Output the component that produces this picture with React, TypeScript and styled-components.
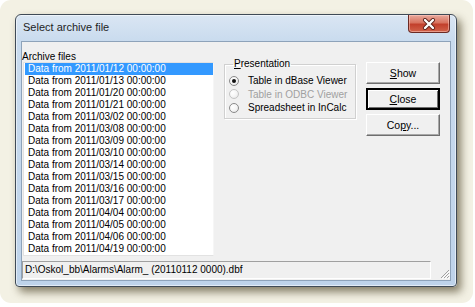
import React from 'react';
import styled, { createGlobalStyle, css } from 'styled-components';

const GlobalStyle = createGlobalStyle`
  html, body {
    margin: 0;
    padding: 0;
    background: #ffffff;
  }
  body {
    font-family: "Liberation Sans", Arial, sans-serif;
  }
`;

const Backdrop = styled.div`
  width: 473px;
  height: 303px;
  box-sizing: border-box;
  padding: 14px 0 0 15px;
  background: #f3f1e4;
  border-radius: 11px;
`;

const Window = styled.div`
  width: 442px;
  height: 273px;
  box-sizing: border-box;
  border: 1px solid #3f4a56;
  border-radius: 6px 6px 4px 4px;
  padding: 0 5px 5px 5px;
  display: flex;
  flex-direction: column;
  background: linear-gradient(180deg, #dae6f3 0px, #c9dbee 26px, #bed3ea 100%);
  box-shadow: 4px 5px 9px rgba(60, 50, 20, 0.6), inset 0 0 0 1px rgba(255, 255, 255, 0.55);
`;

const TitleBar = styled.div`
  height: 26px;
  display: flex;
  align-items: flex-start;
  justify-content: space-between;
  padding-left: 2px;
`;

const Title = styled.span`
  font-size: 11px;
  line-height: 13px;
  color: #1e1e1e;
  margin-top: 6px;
`;

const CloseButton = styled.div`
  width: 42px;
  height: 18px;
  margin-right: 1px;
  box-sizing: border-box;
  border: 1px solid #6b2a24;
  border-top: none;
  border-radius: 0 0 4px 4px;
  background: linear-gradient(180deg, #e9a99d 0%, #d8735f 45%, #c2402c 55%, #d1624a 100%);
  box-shadow: inset 0 0 0 1px rgba(255, 210, 200, 0.5);
  display: flex;
  align-items: center;
  justify-content: center;
`;

const Client = styled.div`
  flex: 1;
  box-sizing: border-box;
  border: 1px solid #8ea3ba;
  background: #f0f0f0;
  padding: 10px 0 1px 0;
  display: flex;
  flex-direction: column;
`;

const MainRow = styled.div`
  height: 204px;
  display: flex;
  align-items: flex-start;
`;

const FilesColumn = styled.div`
  width: 192px;
  display: flex;
  flex-direction: column;
`;

const Caption = styled.span`
  font-size: 10px;
  line-height: 10px;
  color: #000;
`;

const ListBox = styled.div`
  margin-left: 1px;
  height: 194px;
  box-sizing: border-box;
  border: 1px solid #e2e2e2;
  border-right-color: #f6f6f6;
  padding-left: 1px;
  background: #ffffff;
  overflow: hidden;
`;

const ListRow = styled.div<{ $selected?: boolean }>`
  height: 12px;
  line-height: 12px;
  font-size: 10px;
  padding-left: 3px;
  white-space: nowrap;
  color: #000;
  ${(p) =>
    p.$selected &&
    css`
      background: #3399ff;
      color: #ffffff;
    `}
`;

const Group = styled.fieldset`
  margin: 7px 0 0 10px;
  width: 132px;
  box-sizing: border-box;
  padding: 5px 0 3px 4px;
  border: 1px solid #d0d0d0;
  box-shadow: 1px 1px 0 #ffffff, inset 1px 1px 0 #ffffff;
  min-inline-size: 0;
`;

const Legend = styled.legend`
  font-size: 10px;
  line-height: 10px;
  margin-left: 4px;
  padding: 0 1px;
  color: #000;
`;

const Accel = styled.span`
  text-decoration: underline;
`;

const RadioRow = styled.div<{ $disabled?: boolean }>`
  height: 13.5px;
  display: flex;
  align-items: center;
  font-size: 10px;
  color: ${(p) => (p.$disabled ? '#a0a0a0' : '#000')};
`;

const RadioDot = styled.span<{ $checked?: boolean; $disabled?: boolean }>`
  width: 10px;
  height: 10px;
  box-sizing: border-box;
  border-radius: 50%;
  border: 1px solid ${(p) => (p.$disabled ? '#c4c4c4' : '#8a8a8a')};
  background: radial-gradient(circle at 35% 35%, #ffffff 0%, #f4f4f4 55%, #dcdcdc 100%);
  margin-right: 9px;
  display: flex;
  align-items: center;
  justify-content: center;
  &::after {
    content: '';
    width: 4px;
    height: 4px;
    border-radius: 50%;
    background: ${(p) => (p.$checked ? '#111' : 'transparent')};
  }
`;

const ButtonColumn = styled.div`
  margin: 10px 0 0 10px;
  width: 74px;
  display: flex;
  flex-direction: column;
  gap: 4px;
`;

const Button = styled.div<{ $default?: boolean }>`
  height: 22px;
  box-sizing: border-box;
  display: flex;
  align-items: center;
  justify-content: center;
  font-size: 10.5px;
  color: #000;
  background: #f0f0f0;
  border: 1px solid;
  border-color: #ffffff #6e6e6e #6e6e6e #ffffff;
  box-shadow: inset -1px -1px 0 #a8a8a8;
  ${(p) =>
    p.$default &&
    css`
      border-width: 2px;
      border-color: #000;
      box-shadow: inset 1px 1px 0 #ffffff, inset -1px -1px 0 #6e6e6e;
    `}
`;

const StatusRow = styled.div`
  margin-top: 5px;
  height: 18px;
  display: flex;
  align-items: flex-end;
`;

const StatusPanel = styled.div`
  width: 409px;
  height: 18px;
  box-sizing: border-box;
  border: 1px solid;
  border-color: #a0a0a0 #ffffff #ffffff #a0a0a0;
  padding-left: 2px;
  font-size: 10px;
  line-height: 16px;
  color: #000;
  white-space: nowrap;
`;

const Grip = styled.div`
  flex: 1;
  display: flex;
  justify-content: flex-end;
  align-items: flex-end;
`;

const files = [
  '2011/01/12',
  '2011/01/13',
  '2011/01/20',
  '2011/01/21',
  '2011/03/02',
  '2011/03/08',
  '2011/03/09',
  '2011/03/10',
  '2011/03/14',
  '2011/03/15',
  '2011/03/16',
  '2011/03/17',
  '2011/04/04',
  '2011/04/05',
  '2011/04/06',
  '2011/04/19',
];

const App = () => {
  return (
    <>
      <GlobalStyle />
      <Backdrop>
        <Window>
          <TitleBar>
            <Title>Select archive file</Title>
            <CloseButton>
              <svg width="14" height="12" viewBox="0 0 14 12">
                <path d="M3 2 L11 10 M11 2 L3 10" stroke="#5a1f18" strokeWidth="4" strokeLinecap="round" />
                <path d="M3 2 L11 10 M11 2 L3 10" stroke="#ffffff" strokeWidth="2.4" strokeLinecap="round" />
              </svg>
            </CloseButton>
          </TitleBar>
          <Client>
            <MainRow>
              <FilesColumn>
                <Caption>Archive files</Caption>
                <ListBox>
                  {files.map((d, i) => (
                    <ListRow key={d} $selected={i === 0}>
                      Data from {d} 00:00:00
                    </ListRow>
                  ))}
                </ListBox>
              </FilesColumn>
              <Group>
                <Legend>
                  <Accel>P</Accel>resentation
                </Legend>
                <RadioRow>
                  <RadioDot $checked />
                  Table in dBase Viewer
                </RadioRow>
                <RadioRow $disabled>
                  <RadioDot $disabled />
                  Table in ODBC Viewer
                </RadioRow>
                <RadioRow>
                  <RadioDot />
                  Spreadsheet in InCalc
                </RadioRow>
              </Group>
              <ButtonColumn>
                <Button>
                  <Accel>S</Accel>how
                </Button>
                <Button $default>
                  <Accel>C</Accel>lose
                </Button>
                <Button>
                  Co<Accel>p</Accel>y...
                </Button>
              </ButtonColumn>
            </MainRow>
            <StatusRow>
              <StatusPanel>D:\Oskol_bb\Alarms\Alarm_ (20110112 0000).dbf</StatusPanel>
              <Grip>
                <svg width="10" height="10" viewBox="0 0 10 10">
                  <path d="M9 1 L1 9 M9 4 L4 9 M9 7 L7 9" stroke="#a0a0a0" strokeWidth="1" />
                  <path d="M10 2 L2 10 M10 5 L5 10 M10 8 L8 10" stroke="#ffffff" strokeWidth="1" />
                </svg>
              </Grip>
            </StatusRow>
          </Client>
        </Window>
      </Backdrop>
    </>
  );
};

export default App;
